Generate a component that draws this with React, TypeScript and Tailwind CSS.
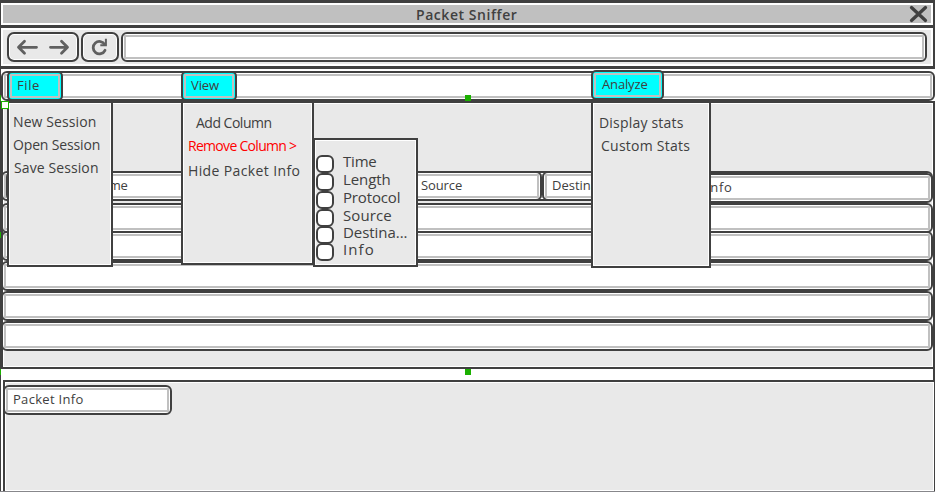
import type { ReactNode } from 'react';
import { clsx } from 'clsx';

function Field({ className, children }: { className?: string; children?: ReactNode }) {
  return (
    <div className={clsx('h-[30px] rounded-[6px] border-2 border-[#404040] bg-white p-px', className)}>
      <div className="flex h-full items-center border-2 border-[#c0c0c0] bg-white pb-[2px] pl-[5px] text-[13px] leading-none whitespace-nowrap">
        {children}
      </div>
    </div>
  );
}

function NavButton({ className, children }: { className?: string; children: ReactNode }) {
  return (
    <button
      className={clsx(
        'flex h-[30px] items-center justify-center rounded-[7px] border-2 border-[#404040] bg-[#e9e9e9] shadow-[inset_0_0_0_1px_white]',
        className,
      )}
    >
      {children}
    </button>
  );
}

function Panel({ className, children }: { className?: string; children?: ReactNode }) {
  return (
    <div className={clsx('border-2 border-[#404040] bg-[#e9e9e9] shadow-[inset_0_0_0_1px_white]', className)}>
      {children}
    </div>
  );
}

function Tab({ label, className, labelClass, children }: { label: string; className: string; labelClass: string; children: ReactNode }) {
  return (
    <div className={clsx('relative h-[30px]', className)}>
      <div className="h-full rounded-[5px] border-2 border-[#404040] bg-[#00ffff] p-px">
        <div className="flex h-full items-center border-2 border-[#c0c0c0] pb-[2px] pl-[5px] text-[13px] leading-none">
          <span className={labelClass}>{label}</span>
        </div>
      </div>
      {children}
    </div>
  );
}

const columns = [
  { name: 'Time', row: 'h-[18px]', text: 'tracking-[-0.2px]' },
  { name: 'Length', row: 'h-[18px]', text: 'tracking-[-0.1px]' },
  { name: 'Protocol', row: 'h-[18px]', text: 'tracking-[-0.15px]' },
  { name: 'Source', row: 'h-[17px]', text: 'tracking-[0.1px]' },
  { name: 'Destina...', row: 'h-[17px]', text: 'tracking-[-0.05px]' },
  { name: 'Info', row: 'h-[18px]', text: 'tracking-[1.1px]' },
];

const arrow = { fill: 'none', stroke: '#606060', strokeWidth: 2.8, strokeLinecap: 'round', strokeLinejoin: 'round' } as const;

export default function App() {
  return (
    <div className="relative h-[493px] w-[935px] overflow-hidden bg-white font-['Open_Sans','Noto_Sans',sans-serif] text-[#404040]">
      <div className="flex h-[491px] flex-col border-t-[3px] border-l border-[#404040]">
        <header className="h-[25px] border-r-2 border-b-[3px] border-[#404040] p-[2px]">
          <div className="flex h-[18px] items-center bg-[#c0c0c0]">
            <h1 className="ml-[413px] pt-[2px] text-[14px] leading-none font-semibold tracking-[0.55px] whitespace-nowrap">Packet Sniffer</h1>
            <svg className="mr-[3px] ml-auto" width="19" height="18" viewBox="0 0 19 18">
              <path d="M2.5 2.5 16.5 15.5M16.5 2.5 2.5 15.5" fill="none" stroke="#404040" strokeWidth="3.3" strokeLinecap="round" />
            </svg>
          </div>
        </header>

        <nav className="h-[41px] border-r-2 border-b-[3px] border-[#404040] p-[2px]">
          <div className="flex h-[34px] gap-[2px] bg-[#e9e9e9] pt-[2px] pr-[4px] pl-[4px]">
            <NavButton className="w-[72px]">
              <svg width="54" height="18" viewBox="0 0 54 18">
                <path d="M20.500 9.300H2.500M8.500 3.300 2.500 9.300 8.500 15.300M34.500 9.300H51.500M45.500 3.300 51.500 9.300 45.500 15.300" {...arrow} />
              </svg>
            </NavButton>
            <NavButton className="w-[38px]">
              <svg width="18" height="18" viewBox="0 0 18 18">
                <path d="M13.800 6.600A6.200 6.200 0 1 0 14 12.300" {...arrow} />
                <path d="M14.900 0.800V7.300H9.300" fill="none" stroke="#606060" strokeWidth="2" />
              </svg>
            </NavButton>
            <Field className="flex-1" />
          </div>
        </nav>

        <div className="relative z-10 mt-[2px] grid h-[30px]">
          <Field className="col-start-1 row-start-1" />
          <div className="col-start-1 row-start-1 flex pl-[6px]">
            <Tab label="File" className="w-[56px]" labelClass="tracking-[0.6px]">
              <Panel className="absolute top-[30px] left-0 h-[166px] w-[106px] pt-[7px] pl-[4px] text-[14px] leading-[23px] whitespace-nowrap">
                <p className="tracking-[0.1px]">New Session</p>
                <p className="tracking-[-0.15px]">Open Session</p>
                <p className="pl-px tracking-[0.1px]">Save Session</p>
              </Panel>
            </Tab>
            <Tab label="View" className="ml-[118px] w-[56px]" labelClass="tracking-[-0.1px]">
              <Panel className="absolute top-[30px] left-0 h-[164px] w-[133px] pt-[8px] pl-[5px] text-[14px] leading-[23px] whitespace-nowrap">
                <p className="pl-[8px] tracking-[-0.5px]">Add Column</p>
                <p className="tracking-[-0.7px] text-[#ff0000]">Remove Column &gt;</p>
                <p className="pt-[2px] tracking-[0.38px]">Hide Packet Info</p>
              </Panel>
              <Panel className="absolute top-[67px] left-[132px] h-[129px] w-[105px] pt-[15px] pl-px">
                {columns.map((c) => (
                  <div key={c.name} className={clsx('flex', c.row)}>
                    <span className="size-[18px] shrink-0 rounded-[6px] border-2 border-[#404040] bg-white" />
                    <span className={clsx('-mt-[3px] ml-[9px] text-[15px] leading-[18px]', c.text)}>{c.name}</span>
                  </div>
                ))}
              </Panel>
            </Tab>
            <Tab label="Analyze" className="-mt-px ml-[354px] w-[73px]" labelClass="pl-px tracking-[-0.15px]">
              <Panel className="absolute top-[31px] left-0 h-[167px] w-[120px] pt-[8px] pl-[6px] text-[14px] leading-[23px] whitespace-nowrap">
                <p className="tracking-[0.2px]">Display stats</p>
                <p className="pl-[2px] tracking-[0.25px]">Custom Stats</p>
              </Panel>
            </Tab>
          </div>
        </div>

        <Panel className="h-[268px] shrink-0">
          <div className="mt-[68px] -ml-[2px] w-[932px]">
            <div className="grid h-[32px]">
              <Field className="col-start-1 row-start-1" />
              <div className="col-start-1 row-start-1 flex pl-[5px]">
                <Field className="w-[230px]">
                  <span className="pl-[83px] tracking-[-0.3px]">Time</span>
                </Field>
                <Field className="w-[306px]">
                  <span className="pl-[175px] tracking-[-0.1px]">Source</span>
                </Field>
                <Field className="w-[154px]">Destination</Field>
                <Field className="mt-[2px] flex-1">
                  <span className="tracking-[0.7px]">Info</span>
                </Field>
              </div>
            </div>
            <Field />
            <Field className="-mt-[2px]" />
            <Field />
            <Field />
            <Field />
          </div>
        </Panel>

        <div className="h-[11px] shrink-0 border-r-2 border-[#404040]" />

        <section className="ml-[2px] flex-1 border-t-2 border-r border-l-2 border-[#404040] bg-[#e9e9e9] pt-[3px] shadow-[inset_0_0_0_1px_white]">
          <Field className="-ml-[2px] w-[169px]">
            <span className="tracking-[0.3px]">Packet Info</span>
          </Field>
        </section>
      </div>
      <div className="h-px bg-[#87878b]" />

      <i className="absolute top-[95px] left-[465px] z-20 size-[6px] bg-[#1bb000]" />
      <i className="absolute top-[369px] left-[465px] z-20 size-[6px] bg-[#1bb000]" />
      <i className="absolute top-[95px] left-0 z-20 h-[6px] w-px bg-[#1bb000]" />
      <i className="absolute top-[232px] left-0 z-20 h-[6px] w-px bg-[#1bb000]" />
      <i className="absolute top-[369px] left-0 z-20 h-[6px] w-px bg-[#1bb000]" />
      <i className="absolute top-[101px] left-px z-20 size-[8px] border border-[#1bb000] bg-white" />
    </div>
  );
}
